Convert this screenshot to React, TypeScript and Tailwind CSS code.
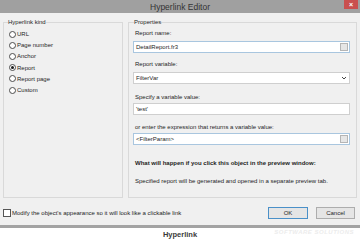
import React from "react";

const font = { fontFamily: '"Liberation Sans", Arial, sans-serif' };

function Radio({ label, checked }: { label: string; checked?: boolean }) {
  return (
    <div className="flex h-[11.2px] items-center">
      <div className="ml-[4px] flex h-[7px] w-[7px] items-center justify-center rounded-full border border-[#4d4d4d] bg-white">
        {checked && <div className="h-[3px] w-[3px] rounded-full bg-[#1a1a1a]" />}
      </div>
      <span className="ml-[1px] text-[6px] leading-[8px] text-[#1e1e1e]">{label}</span>
    </div>
  );
}

function Field({ value, ellipsis, select, blue }: { value: string; ellipsis?: boolean; select?: boolean; blue?: boolean }) {
  return (
    <div
      className={`flex h-[12px] items-center border bg-white pl-[2px] pr-[1px] ${blue ? "border-[#a9c6df]" : "border-[#cfcfcf]"}`}
    >
      <span className="flex-1 text-[6px] leading-[8px] text-[#1e1e1e]">{value}</span>
      {ellipsis && <div className="h-[8px] w-[8px] border border-[#b5b5b5] bg-[#e6e6e6]" />}
      {select && (
        <svg width="6" height="6" viewBox="0 0 6 6" className="mr-[1px]">
          <path d="M1 2 L3 4 L5 2" stroke="#444" strokeWidth="1" fill="none" />
        </svg>
      )}
    </div>
  );
}

export default function App() {
  return (
    <div className="flex h-[240px] w-[360px] flex-col overflow-hidden bg-white" style={font}>
      {/* title bar */}
      <div className="relative flex h-[13px] items-center justify-center bg-[#a0a0a0]">
        <span className="text-[8.5px] leading-[10px] text-[#333333]">Hyperlink Editor</span>
        <div className="absolute right-[2px] top-0 flex h-[9px] w-[14px] items-center justify-center bg-[#c9504f]">
          <span className="text-[7px] font-bold leading-[7px] text-white">×</span>
        </div>
      </div>
      {/* body */}
      <div className="flex h-[212px] flex-col bg-[#f0f0f0] px-[3px] pt-[5px]">
        <div className="flex h-[180px] gap-[5px]">
          <fieldset className="w-[120px] border border-[#d9d9d9] px-[1px]">
            <legend className="ml-[3px] text-[6px] leading-[8px] text-[#1e1e1e]">Hyperlink kind</legend>
            <div className="mt-[2.5px] flex flex-col">
              <Radio label="URL" />
              <Radio label="Page number" />
              <Radio label="Anchor" />
              <Radio label="Report" checked />
              <Radio label="Report page" />
              <Radio label="Custom" />
            </div>
          </fieldset>
          <fieldset className="flex-1 border border-[#d9d9d9] pl-[4px] pr-[6px]">
            <legend className="ml-[1px] text-[6px] leading-[8px] text-[#1e1e1e]">Properties</legend>
            <div className="flex flex-col text-[6px] leading-[8px] text-[#1e1e1e]">
              <span className="ml-[2px] mt-[3px]">Report name:</span>
              <div className="mt-[4px]">
                <Field value="DetailReport.fr3" ellipsis blue />
              </div>
              <span className="ml-[2px] mt-[7px]">Report variable:</span>
              <div className="mt-[4px]">
                <Field value="FilterVar" select />
              </div>
              <span className="ml-[2px] mt-[9px]">Specify a variable value:</span>
              <div className="mt-[2px]">
                <Field value="'test'" />
              </div>
              <span className="ml-[2px] mt-[8px]">or enter the expression that returns a variable value:</span>
              <div className="mt-[2px]">
                <Field value="<FilterParam>" ellipsis blue />
              </div>
              <span className="ml-[2px] mt-[14px] font-bold">
                What will happen if you click this object in the preview window:
              </span>
              <span className="ml-[2px] mt-[10px]">
                Specified report will be generated and opened in a separate preview tab.
              </span>
            </div>
          </fieldset>
        </div>
        <div className="mt-[9px] flex items-center">
          <div className="h-[8px] w-[8px] border border-[#555] bg-white" />
          <span className="ml-[1px] text-[6px] leading-[8px] text-[#1e1e1e]">
            Modify the object's appearance so it will look like a clickable link
          </span>
          <div className="ml-auto mr-[2px] flex gap-[8px]">
            <div className="flex h-[12px] w-[40px] items-center justify-center border border-[#4a90c8] bg-[#e5e5e5] text-[6px] leading-[8px] text-[#1e1e1e]">
              OK
            </div>
            <div className="flex h-[12px] w-[39px] items-center justify-center border border-[#adadad] bg-[#e5e5e5] text-[6px] leading-[8px] text-[#1e1e1e]">
              Cancel
            </div>
          </div>
        </div>
      </div>
      {/* bottom band */}
      <div className="h-[3px] bg-[#a3a3a3]" />
      <div className="relative flex flex-1 items-center justify-center">
        <span className="text-[7.5px] font-bold leading-[9px] text-[#3a3a3a]">Hyperlink</span>
        <span className="absolute right-[6px] top-[1px] text-[6px] font-bold italic leading-[7px] tracking-[0.5px] text-[#ececec]">
          SOFTWARE SOLUTIONS
        </span>
      </div>
    </div>
  );
}
